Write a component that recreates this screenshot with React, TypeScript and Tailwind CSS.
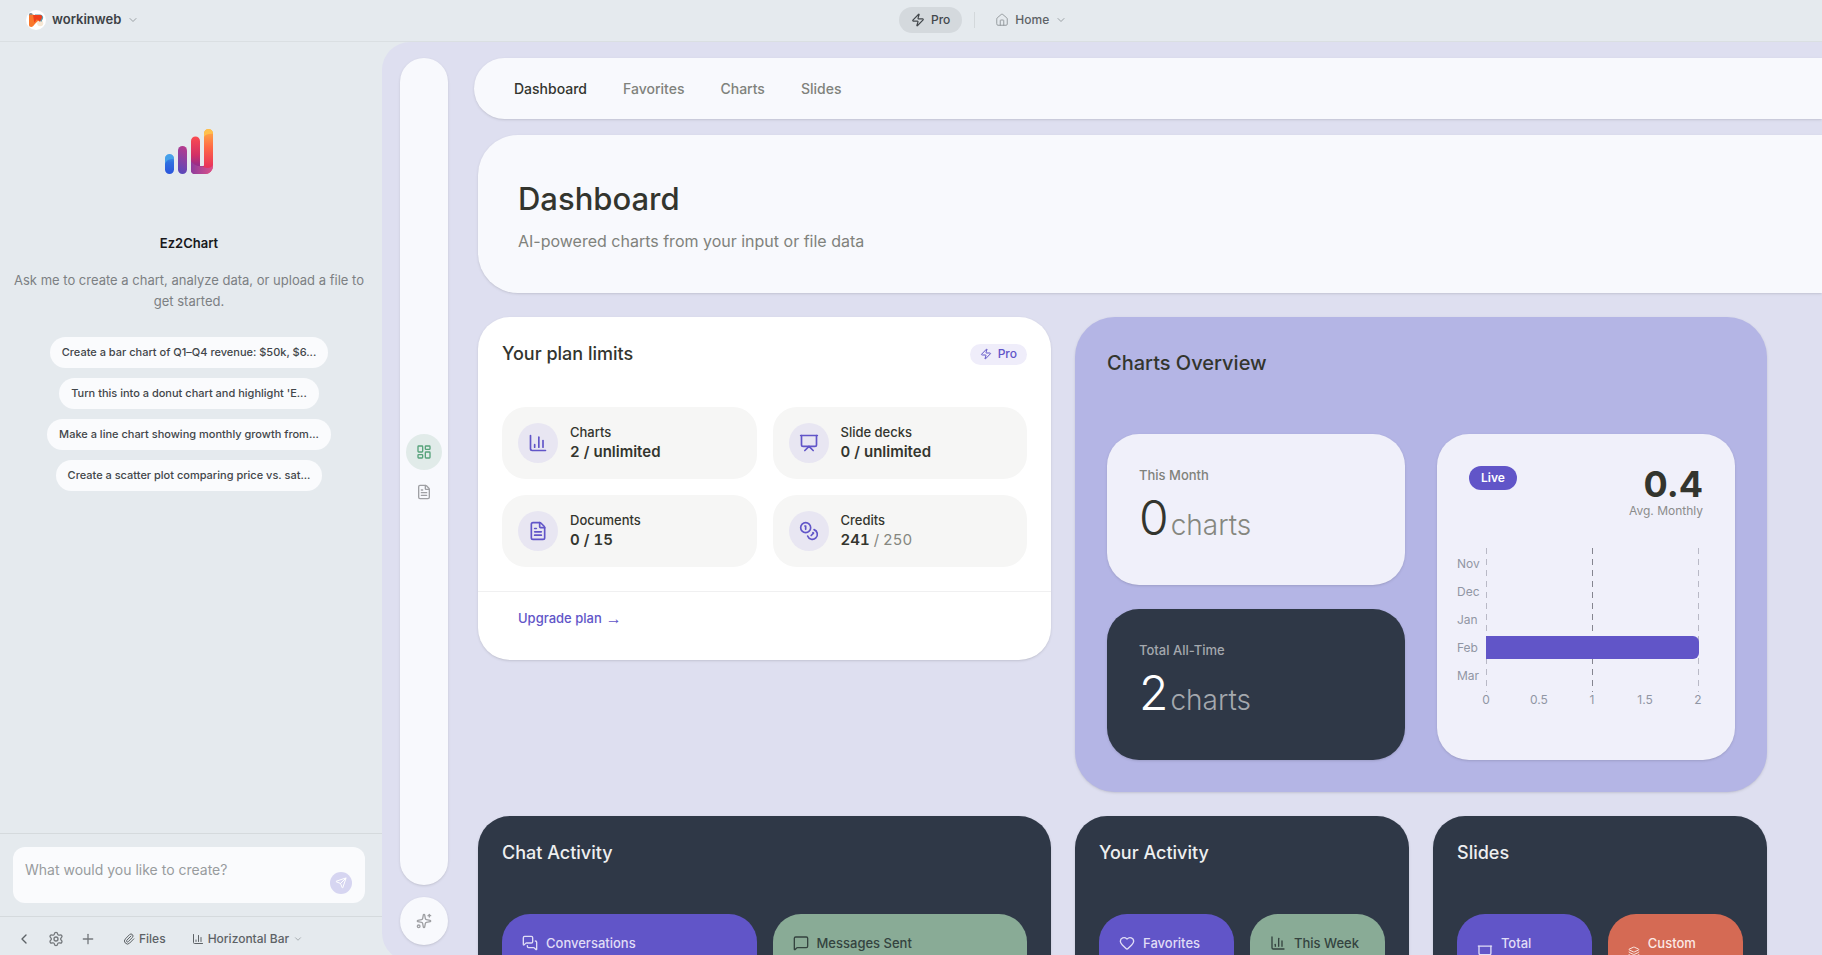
import type { ReactNode } from 'react';
import {
  ChartColumn, ChevronDown, ChevronLeft, Coins, FileText, Heart, House, Layers, LayoutDashboard,
  MessageSquare, MessagesSquare, Paperclip, Plus, Presentation, Send, Settings, Sparkles, Zap,
} from 'lucide-react';
import type { LucideIcon } from 'lucide-react';

const suggestions = [
  'Create a bar chart of Q1–Q4 revenue: $50k, $6...',
  "Turn this into a donut chart and highlight 'E...",
  'Make a line chart showing monthly growth from...',
  'Create a scatter plot comparing price vs. sat...',
];

const tabs = ['Dashboard', 'Favorites', 'Charts', 'Slides'];

const limits: { label: string; used: string; total: string; icon: LucideIcon; muted?: boolean }[] = [
  { label: 'Charts', used: '2', total: '/ unlimited', icon: ChartColumn },
  { label: 'Slide decks', used: '0', total: '/ unlimited', icon: Presentation },
  { label: 'Documents', used: '0', total: '/ 15', icon: FileText },
  { label: 'Credits', used: '241', total: '/ 250', icon: Coins, muted: true },
];

const months = [
  { name: 'Nov', charts: 0 },
  { name: 'Dec', charts: 0 },
  { name: 'Jan', charts: 0 },
  { name: 'Feb', charts: 2 },
  { name: 'Mar', charts: 0 },
];

function WorkspaceLogo() {
  return (
    <svg viewBox="0 0 20 20" className="size-5 shrink-0" aria-hidden="true">
      <circle cx="10" cy="10" r="10" fill="#fff" />
      <circle cx="14.2" cy="13.2" r="3" fill="#f6e7d4" />
      <path d="M9 4.6h5.2a3 3 0 0 1 2.6 4.4l-1.6 3L9 6z" fill="#5d9ab0" />
      <circle cx="4.8" cy="5" r="2" fill="#7d8c96" />
      <path d="M3 6c0-.8.6-1.3 1.400-1.300H8l6.500 3.800-5.600 5.600C7.500 15.900 6.600 17 5.200 17 3.800 17 3 16 3 14.700z" fill="#f9772b" />
      <path d="M7 5h7.200c1.700 0 2.300 1.800 1.500 3.200l-1.900 3.600-3-2.600-2.500 3.500z" fill="#f0401c" />
    </svg>
  );
}

function BrandLogo() {
  return (
    <svg viewBox="0 0 48 45" className="h-[45px] w-12" aria-hidden="true">
      <defs>
        <linearGradient id="blue" x1="0" y1="0" x2="0" y2="1">
          <stop offset="0" stopColor="#3f9cea" /><stop offset=".4" stopColor="#2f6fe0" /><stop offset="1" stopColor="#2b55dc" />
        </linearGradient>
        <linearGradient id="violet" x1=".6" y1="0" x2=".4" y2="1">
          <stop offset="0" stopColor="#b63a8c" /><stop offset="1" stopColor="#5848bb" />
        </linearGradient>
        <linearGradient id="red" x1="0" y1="0" x2="0" y2="1">
          <stop offset="0" stopColor="#fb4c50" /><stop offset=".5" stopColor="#d22f66" /><stop offset=".8" stopColor="#8f2d8e" />
        </linearGradient>
        <linearGradient id="orange" x1="0" y1="0" x2="0" y2="1">
          <stop offset="0" stopColor="#ffb347" /><stop offset=".4" stopColor="#ff6a45" /><stop offset=".85" stopColor="#e8325c" />
        </linearGradient>
        <linearGradient id="base" x1="0" y1="0" x2="1" y2="0">
          <stop offset="0" stopColor="#8f3c9c" /><stop offset="1" stopColor="#dc5289" />
        </linearGradient>
      </defs>
      <rect x="0" y="26" width="9" height="19" rx="4.500" fill="url(#blue)" />
      <path d="M0 35c1-3.500 4-5 9-5.200v-.3a4.500 4.500 0 0 0-9 0z" fill="#45a0ea" />
      <rect x="13" y="17" width="9" height="28" rx="4.500" fill="url(#violet)" />
      <path d="M26 12a4.500 4.500 0 0 1 9 0v25h4v8h-9a4 4 0 0 1-4-4z" fill="url(#red)" />
      <path d="M39 4.500a4.500 4.500 0 0 1 9 0V37a8 8 0 0 1-8 8h-5v-7h2a2 2 0 0 0 2-2z" fill="url(#orange)" />
      <path d="M26 32c2 3 5 5 9 5.300h2.500c1 1.200 3 1.700 5 1.700 2.500 0 4.500-1 5.500-3v1a8 8 0 0 1-8 8H30a4 4 0 0 1-4-4z" fill="url(#base)" />
      <path d="M39 8c1-2.500 5-3.500 9-3.200v-.3a4.500 4.500 0 0 0-9 0z" fill="#ffc04d" />
    </svg>
  );
}

function TopBar() {
  return (
    <header className="grid h-[42px] shrink-0 grid-cols-[899fr_923fr] items-center border-b border-[#dadfe2] pb-0.5">
      <div className="pl-[26px]">
        <button className="flex items-center gap-1.5 text-[13px] font-semibold text-[#3c4145]">
          <WorkspaceLogo />
          workinweb
          <ChevronDown className="size-3 text-[#9ba1a5]" />
        </button>
      </div>
      <nav className="flex items-center" aria-label="Workspace">
        <button className="flex h-[26px] items-center gap-1.5 rounded-full bg-[#d4d9dd] px-3 text-[12px] font-medium text-[#42474b]">
          <Zap className="size-3.5" />
          Pro
        </button>
        <span className="mx-3 h-4 w-px bg-[#d3d8db]" />
        <button className="flex items-center gap-1.5 px-2 text-[12px] font-medium text-[#5d6266]">
          <House className="size-3.5 text-[#8c9195]" strokeWidth={1.5} />
          Home
          <ChevronDown className="size-3 text-[#9ba1a5]" />
        </button>
      </nav>
    </header>
  );
}

function Assistant() {
  return (
    <aside className="flex w-[382px] shrink-0 flex-col">
      <div className="flex min-h-0 flex-1 flex-col items-center pr-1 pt-[87px] text-[13px]">
        <BrandLogo />
        <h2 className="mt-[59px] font-semibold leading-5 text-[#17181c]">Ez2Chart</h2>
        <p className="mt-[17px] px-3 text-center leading-[21px] text-[#7c8083]">
          Ask me to create a chart, analyze data, or upload a file to get started.
        </p>
        <ul className="mt-[25px] flex flex-col items-center gap-2.5">
          {suggestions.map((text) => (
            <li key={text} className="flex">
              <button className="h-[31px] rounded-full bg-[#fafbfd] px-3 text-[11px] font-medium text-[#42464a]">{text}</button>
            </li>
          ))}
        </ul>
      </div>
      <form className="border-t border-[#d5dadd] py-[13px] pl-[13px] pr-[17px]" onSubmit={(e) => e.preventDefault()}>
        <div className="flex h-14 items-end gap-2 rounded-xl bg-[#fafbfd] pl-3 pr-[13px]">
          <input
            aria-label="Message"
            placeholder="What would you like to create?"
            className="h-11 min-w-0 flex-1 self-start bg-transparent text-[14px] text-[#42464a] outline-none placeholder:text-[#989b9e]"
          />
          <button aria-label="Send" className="mb-[9px] flex size-[22px] items-center justify-center rounded-full bg-[#d6d5f1] text-white">
            <Send className="size-3" />
          </button>
        </div>
      </form>
      <div className="flex h-[45px] items-center border-t border-[#d5dadd] pl-4 text-[12px] font-medium text-[#5d6266]">
        <button aria-label="Back"><ChevronLeft className="size-4" /></button>
        <button aria-label="Settings" className="ml-4 text-[#75797d]"><Settings className="size-4" /></button>
        <button aria-label="Add" className="ml-4 text-[#75797d]"><Plus className="size-4" /></button>
        <button className="ml-[27px] flex items-center gap-1"><Paperclip className="size-3" />Files</button>
        <button className="ml-[26px] flex items-center gap-1">
          <ChartColumn className="size-3" />
          Horizontal Bar
          <ChevronDown className="size-2.5 text-[#9ba1a5]" />
        </button>
      </div>
    </aside>
  );
}

function Rail() {
  return (
    <div className="flex w-12 shrink-0 flex-col gap-3">
      <nav aria-label="Sections" className="flex flex-1 flex-col items-center justify-center gap-1 rounded-full bg-[#f8f9fd] shadow">
        <button aria-label="Dashboard" className="flex size-9 items-center justify-center rounded-full bg-[#e1ebe9] text-[#56a27a]">
          <LayoutDashboard className="size-4" />
        </button>
        <button aria-label="Documents" className="flex size-9 items-center justify-center text-[#9fa0a4]">
          <FileText className="size-4" />
        </button>
      </nav>
      <button aria-label="Assistant" className="flex size-12 items-center justify-center rounded-full bg-[#f8f9fd] text-[#9fa0a4] shadow">
        <Sparkles className="size-4" />
      </button>
    </div>
  );
}

function PlanLimits() {
  return (
    <section className="self-start rounded-[32px] bg-white shadow">
      <div className="flex items-center justify-between px-6 pt-[25px]">
        <h2 className="text-[18px] font-medium leading-6">Your plan limits</h2>
        <span className="flex h-[21px] items-center gap-1.5 rounded-full bg-[#efedfa] px-2.5 text-[12px] font-medium text-[#6155c8]">
          <Zap className="size-3" />
          Pro
        </span>
      </div>
      <dl className="grid grid-cols-2 gap-4 px-6 pb-6 pt-[41px]">
        {limits.map(({ label, used, total, icon: Icon, muted }) => (
          <div key={label} className="flex h-[72px] items-center gap-3 rounded-3xl bg-[#f6f6f5] px-4">
            <span className="flex size-10 shrink-0 items-center justify-center rounded-full bg-[#e8e6f2] text-[#6155c8]">
              <Icon className="size-5" />
            </span>
            <div className="pb-0.5 leading-5">
              <dt className="text-[13px] font-medium">{label}</dt>
              <dd className="text-[15px] font-semibold tabular-nums">
                {used} <span className={muted ? 'font-normal text-[#85877f]' : ''}>{total}</span>
              </dd>
            </div>
          </div>
        ))}
      </dl>
      <div className="border-t border-[#f0f0f1] px-6 pb-[23px] pt-[9px]">
        <a href="#upgrade" className="inline-flex h-9 items-center gap-1 px-4 text-[13px] font-medium text-[#6155c8]">
          Upgrade plan <span className="font-['Liberation_Sans',sans-serif] text-[16px] font-normal">→</span>
        </a>
      </div>
    </section>
  );
}

function BarChart() {
  const left = 33;
  const span = 212;
  return (
    <svg viewBox="0 0 266 164" className="w-full font-['Inter'] text-[12px]" role="img" aria-label="Charts per month">
      {[0, 1, 2].map((v) => (
        <line key={v} x1={left + 0.5 + (v * span) / 2} x2={left + 0.5 + (v * span) / 2} y1="0" y2="144"
          stroke={v === 1 ? '#85858f' : '#b9b9c6'} strokeDasharray="6 5" />
      ))}
      {months.map(({ name, charts }, i) => (
        <g key={name}>
          <text x="4" y={20 + i * 28} fill="#9096a4">{name}</text>
          {charts > 0 && (
            <path
              d={`M${left} ${4 + i * 28}h${(charts * span) / 2 - 5}a6 6 0 0 1 6 6v11a6 6 0 0 1-6 6H${left}z`}
              fill="#6155c8"
            />
          )}
        </g>
      ))}
      {['0', '0.5', '1', '1.5', '2'].map((label, i) => (
        <text key={label} x={left + (i * span) / 4} y="156" textAnchor="middle" fill="#9096a4">{label}</text>
      ))}
    </svg>
  );
}

function CountTile({ label, value, dark }: { label: string; value: string; dark?: boolean }) {
  return (
    <div className={`h-[151px] rounded-[32px] px-8 pt-[31px] shadow ${dark ? 'bg-[#2f3847] text-white' : 'bg-[#f0f0fa]'}`}>
      <p className={`text-[13px] font-medium leading-5 ${dark ? 'text-[#a4a8ae]' : 'text-[#80827c]'}`}>{label}</p>
      <p className="flex items-baseline gap-0.5 text-[48px] font-light leading-[66px]">
        {value}
        <span className={`text-[28px] ${dark ? 'text-[#a4a8ae]' : 'text-[#85877f]'}`}>charts</span>
      </p>
    </div>
  );
}

function ChartsOverview() {
  return (
    <section className="col-span-2 rounded-[40px] bg-[#b4b5e5] p-8 shadow">
      <h2 className="text-[20px] font-medium leading-7">Charts Overview</h2>
      <div className="mt-[57px] grid grid-cols-2 gap-8">
        <div className="flex flex-col gap-6">
          <CountTile label="This Month" value="0" />
          <CountTile label="Total All-Time" value="2" dark />
        </div>
        <div className="rounded-[32px] bg-[#f0f0fa] shadow">
          <div className="flex items-start justify-between px-8 pt-8">
            <span className="flex h-6 items-center rounded-full bg-[#6155c8] px-3 text-[12px] font-semibold text-white">Live</span>
            <div className="text-right">
              <p className="text-[36px] font-bold leading-9">0.4</p>
              <p className="text-[12px] leading-[18px] text-[#8b8c8c]">Avg. Monthly</p>
            </div>
          </div>
          <div className="px-4 pt-7"><BarChart /></div>
        </div>
      </div>
    </section>
  );
}

function ActivityCard({ title, children }: { title: string; children: ReactNode }) {
  return (
    <section className="rounded-[32px] bg-[#2f3847] px-6 pb-6 pt-[25px] shadow">
      <h2 className="text-[18px] font-medium leading-6 text-[#eeeff0]">{title}</h2>
      <div className="mt-[49px] grid grid-cols-2 gap-4">{children}</div>
    </section>
  );
}

const tones = {
  violet: 'bg-[#6155c8] text-[#e0ddf6]',
  green: 'bg-[#89ab96] text-[#34433f]',
  coral: 'bg-[#d56a54] text-[#fbe9e5]',
};

function ActivityTile({ label, icon: Icon, tone }: { label: string; icon: LucideIcon; tone: keyof typeof tones }) {
  return (
    <div className={`h-32 min-w-0 rounded-[28px] px-5 pt-5 ${tones[tone]}`}>
      <p className="flex items-center gap-2 text-[13px] font-medium leading-[18px]">
        <Icon className="size-4" />
        {label}
      </p>
    </div>
  );
}

export default function App() {
  return (
    <div className="h-screen overflow-hidden bg-[#e5eaee] font-['Inter',sans-serif] text-[#33352e]">
      <div className="flex h-[calc(100%+6px)] flex-col">
        <TopBar />
        <div className="flex min-h-0 flex-1">
          <Assistant />
          <div className="flex min-w-0 flex-1 overflow-hidden rounded-l-[28px] bg-[#dedff0] py-4 pl-[18px]">
            <Rail />
            <main className="ml-[26px] min-w-0 flex-1">
              <nav aria-label="Pages" className="flex h-[61px] items-center gap-9 rounded-l-full bg-[#f8f9fd] pl-10 text-[14px] font-medium shadow">
                {tabs.map((tab, i) => (
                  <a key={tab} href={`#${tab.toLowerCase()}`} className={i === 0 ? '' : 'text-[#80827c]'}>{tab}</a>
                ))}
              </nav>
              <div className="ml-1 mt-4">
                <header className="h-[158px] rounded-l-[40px] bg-[#f8f9fd] pl-10 pt-11 shadow">
                  <h1 className="text-[31px] font-medium leading-10">Dashboard</h1>
                  <p className="mt-2 text-[16px] leading-7 text-[#80827c]">AI-powered charts from your input or file data</p>
                </header>
                <div className="mt-6 grid grid-cols-[573fr_334fr_334fr] gap-6 pb-6 pr-[55px]">
                  <PlanLimits />
                  <ChartsOverview />
                  <ActivityCard title="Chat Activity">
                    <ActivityTile label="Conversations" icon={MessagesSquare} tone="violet" />
                    <ActivityTile label="Messages Sent" icon={MessageSquare} tone="green" />
                  </ActivityCard>
                  <ActivityCard title="Your Activity">
                    <ActivityTile label="Favorites" icon={Heart} tone="violet" />
                    <ActivityTile label="This Week" icon={ChartColumn} tone="green" />
                  </ActivityCard>
                  <ActivityCard title="Slides">
                    <ActivityTile label="Total Slides" icon={Presentation} tone="violet" />
                    <ActivityTile label="Custom Themes" icon={Layers} tone="coral" />
                  </ActivityCard>
                </div>
              </div>
            </main>
          </div>
        </div>
      </div>
    </div>
  );
}
